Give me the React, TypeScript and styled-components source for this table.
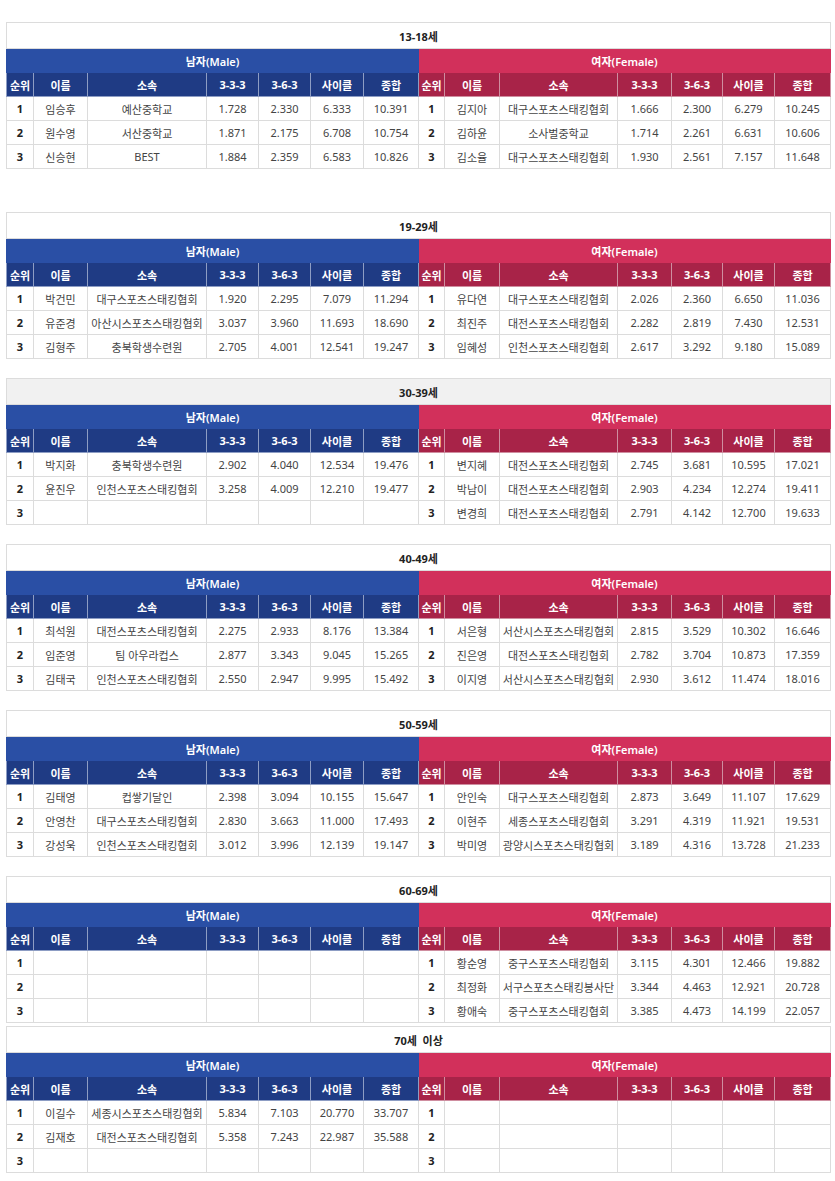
import { ReactElement } from "react";
import styled, { createGlobalStyle } from "styled-components";

const GlobalStyle = createGlobalStyle`
  body {
    margin: 0;
    padding: 22px 0 0 6px;
    background: #ffffff;
    font-family: "Noto Sans", "Noto Sans CJK KR", sans-serif;
    color: #333333;
  }
`;

const Page = styled.div`
  width: 824px;
`;

const Table = styled.table<{ $gap: number }>`
  width: 824px;
  table-layout: fixed;
  border-collapse: collapse;
  margin-bottom: ${(p) => p.$gap}px;
  font-size: 11px;
  td,
  th {
    border: 1px solid #dcdcdc;
    text-align: center;
    padding: 0;
    white-space: nowrap;
    overflow: hidden;
  }
`;

const TitleCell = styled.th<{ $shade?: boolean }>`
  height: 25px;
  background: ${(p) => (p.$shade ? "#f1f1f1" : "#ffffff")};
  font-weight: 700;
  color: #222222;
  white-space: pre !important;
`;

const GenderCell = styled.th<{ $female?: boolean }>`
  height: 23px;
  background: ${(p) => (p.$female ? "#d2305b" : "#2a4fa5")};
  color: #ffffff;
  font-weight: 600;
  border-color: ${(p) => (p.$female ? "#d2305b" : "#2a4fa5")} !important;
`;

const ColHead = styled.th<{ $female?: boolean }>`
  height: 23px;
  background: ${(p) => (p.$female ? "#a82348" : "#1f3b84")};
  color: #ffffff;
  font-weight: 700;
  border-color: ${(p) => (p.$female ? "#cf8ea0" : "#8d9dc4")} !important;
  border-top-color: ${(p) => (p.$female ? "#e07b96" : "#6d86c4")} !important;
`;

const Cell = styled.td<{ $rank?: boolean }>`
  height: 23px;
  font-weight: ${(p) => (p.$rank ? 700 : 400)};
  color: ${(p) => (p.$rank ? "#222222" : "#444444")};
`;

type Row = [string, string, string, string, string, string];

interface Group {
  title: string;
  male: (Row | null)[];
  female: (Row | null)[];
  gap: number;
  shade?: boolean;
}

const groups: Group[] = [
  {
    title: "13-18세",
    gap: 43,
    male: [
      ["임승후", "예산중학교", "1.728", "2.330", "6.333", "10.391"],
      ["원수영", "서산중학교", "1.871", "2.175", "6.708", "10.754"],
      ["신승현", "BEST", "1.884", "2.359", "6.583", "10.826"],
    ],
    female: [
      ["김지아", "대구스포츠스태킹협회", "1.666", "2.300", "6.279", "10.245"],
      ["김하윤", "소사벌중학교", "1.714", "2.261", "6.631", "10.606"],
      ["김소율", "대구스포츠스태킹협회", "1.930", "2.561", "7.157", "11.648"],
    ],
  },
  {
    title: "19-29세",
    gap: 19,
    male: [
      ["박건민", "대구스포츠스태킹협회", "1.920", "2.295", "7.079", "11.294"],
      ["유준경", "아산시스포츠스태킹협회", "3.037", "3.960", "11.693", "18.690"],
      ["김형주", "충북학생수련원", "2.705", "4.001", "12.541", "19.247"],
    ],
    female: [
      ["유다연", "대구스포츠스태킹협회", "2.026", "2.360", "6.650", "11.036"],
      ["최진주", "대전스포츠스태킹협회", "2.282", "2.819", "7.430", "12.531"],
      ["임혜성", "인천스포츠스태킹협회", "2.617", "3.292", "9.180", "15.089"],
    ],
  },
  {
    title: "30-39세",
    gap: 19,
    shade: true,
    male: [
      ["박지화", "충북학생수련원", "2.902", "4.040", "12.534", "19.476"],
      ["윤진우", "인천스포츠스태킹협회", "3.258", "4.009", "12.210", "19.477"],
      null,
    ],
    female: [
      ["변지혜", "대전스포츠스태킹협회", "2.745", "3.681", "10.595", "17.021"],
      ["박남이", "대전스포츠스태킹협회", "2.903", "4.234", "12.274", "19.411"],
      ["변경희", "대전스포츠스태킹협회", "2.791", "4.142", "12.700", "19.633"],
    ],
  },
  {
    title: "40-49세",
    gap: 19,
    male: [
      ["최석원", "대전스포츠스태킹협회", "2.275", "2.933", "8.176", "13.384"],
      ["임준영", "팀 아우라컵스", "2.877", "3.343", "9.045", "15.265"],
      ["김태국", "인천스포츠스태킹협회", "2.550", "2.947", "9.995", "15.492"],
    ],
    female: [
      ["서은형", "서산시스포츠스태킹협회", "2.815", "3.529", "10.302", "16.646"],
      ["진은영", "대전스포츠스태킹협회", "2.782", "3.704", "10.873", "17.359"],
      ["이지영", "서산시스포츠스태킹협회", "2.930", "3.612", "11.474", "18.016"],
    ],
  },
  {
    title: "50-59세",
    gap: 19,
    male: [
      ["김태영", "컵쌓기달인", "2.398", "3.094", "10.155", "15.647"],
      ["안영찬", "대구스포츠스태킹협회", "2.830", "3.663", "11.000", "17.493"],
      ["강성욱", "인천스포츠스태킹협회", "3.012", "3.996", "12.139", "19.147"],
    ],
    female: [
      ["안인숙", "대구스포츠스태킹협회", "2.873", "3.649", "11.107", "17.629"],
      ["이현주", "세종스포츠스태킹협회", "3.291", "4.319", "11.921", "19.531"],
      ["박미영", "광양시스포츠스태킹협회", "3.189", "4.316", "13.728", "21.233"],
    ],
  },
  {
    title: "60-69세",
    gap: 3,
    male: [null, null, null],
    female: [
      ["황순영", "중구스포츠스태킹협회", "3.115", "4.301", "12.466", "19.882"],
      ["최정화", "서구스포츠스태킹봉사단", "3.344", "4.463", "12.921", "20.728"],
      ["황애숙", "중구스포츠스태킹협회", "3.385", "4.473", "14.199", "22.057"],
    ],
  },
  {
    title: "70세  이상",
    gap: 0,
    male: [
      ["이길수", "세종시스포츠스태킹협회", "5.834", "7.103", "20.770", "33.707"],
      ["김재호", "대전스포츠스태킹협회", "5.358", "7.243", "22.987", "35.588"],
      null,
    ],
    female: [null, null, null],
  },
];

const widths = [27, 54, 119, 52, 52, 53, 55, 26, 55, 118, 54, 51, 52, 56];
const heads = ["순위", "이름", "소속", "3-3-3", "3-6-3", "사이클", "종합"];

function Side({ rank, row }: { rank: number; row: Row | null }): ReactElement {
  return (
    <>
      <Cell $rank>{rank}</Cell>
      {(row ?? ["", "", "", "", "", ""]).map((v, i) => (
        <Cell key={i}>{v}</Cell>
      ))}
    </>
  );
}

function AgeTable({ group }: { group: Group }): ReactElement {
  return (
    <Table $gap={group.gap}>
      <colgroup>
        {widths.map((w, i) => (
          <col key={i} style={{ width: w }} />
        ))}
      </colgroup>
      <thead>
        <tr>
          <TitleCell colSpan={14} $shade={group.shade}>
            {group.title}
          </TitleCell>
        </tr>
        <tr>
          <GenderCell colSpan={7}>남자(Male)</GenderCell>
          <GenderCell colSpan={7} $female>
            여자(Female)
          </GenderCell>
        </tr>
        <tr>
          {heads.map((h) => (
            <ColHead key={"m" + h}>{h}</ColHead>
          ))}
          {heads.map((h) => (
            <ColHead key={"f" + h} $female>
              {h}
            </ColHead>
          ))}
        </tr>
      </thead>
      <tbody>
        {[0, 1, 2].map((i) => (
          <tr key={i}>
            <Side rank={i + 1} row={group.male[i]} />
            <Side rank={i + 1} row={group.female[i]} />
          </tr>
        ))}
      </tbody>
    </Table>
  );
}

export default function App(): ReactElement {
  return (
    <>
      <GlobalStyle />
      <Page>
        {groups.map((g) => (
          <AgeTable key={g.title} group={g} />
        ))}
      </Page>
    </>
  );
}
